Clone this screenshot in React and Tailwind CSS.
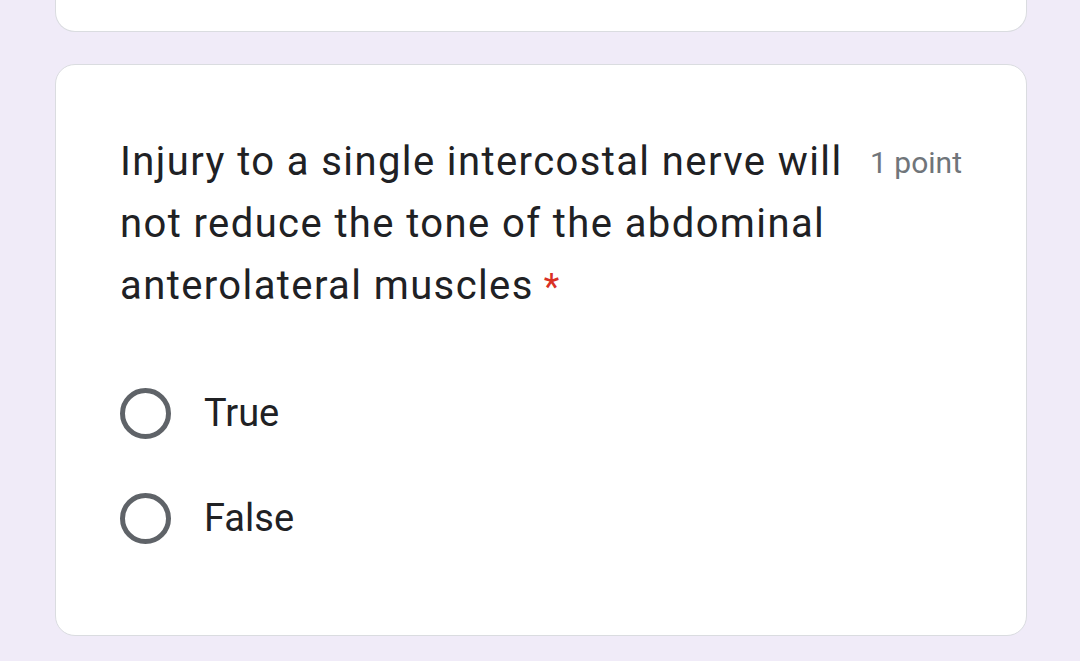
export default function App() {
  return (
    <div className="flex h-[661px] w-[1080px] flex-col gap-[32px] overflow-hidden bg-[#f0ebf8] pl-[55px] pr-[53px] font-['Roboto',sans-serif]">
      <div className="h-[32px] shrink-0 rounded-b-[20px] border border-t-0 border-[#dadce0] bg-white" />

      <div className="h-[572px] shrink-0 rounded-[20px] border border-[#dadce0] bg-white px-[64px] pt-[66px]">
        <div className="flex items-baseline justify-between">
          <div className="w-[745px] text-[40px] leading-[62px] tracking-[1.4px] text-[#202124]">
            Injury to a single intercostal nerve will not reduce the tone of the abdominal anterolateral muscles
            <span className="ml-[10px] text-[36px] text-[#d93025]">*</span>
          </div>
          <div className="relative -top-[2px] text-[30px] text-[#70757a]">1 point</div>
        </div>

        <div className="mt-[43px] flex flex-col">
          {["True", "False"].map((label) => (
            <div key={label} className="flex h-[105px] items-center">
              <span className="h-[51px] w-[51px] shrink-0 rounded-full border-[5px] border-[#5f6368]" />
              <span className="ml-[33px] text-[38px] text-[#202124]">{label}</span>
            </div>
          ))}
        </div>
      </div>
    </div>
  );
}
